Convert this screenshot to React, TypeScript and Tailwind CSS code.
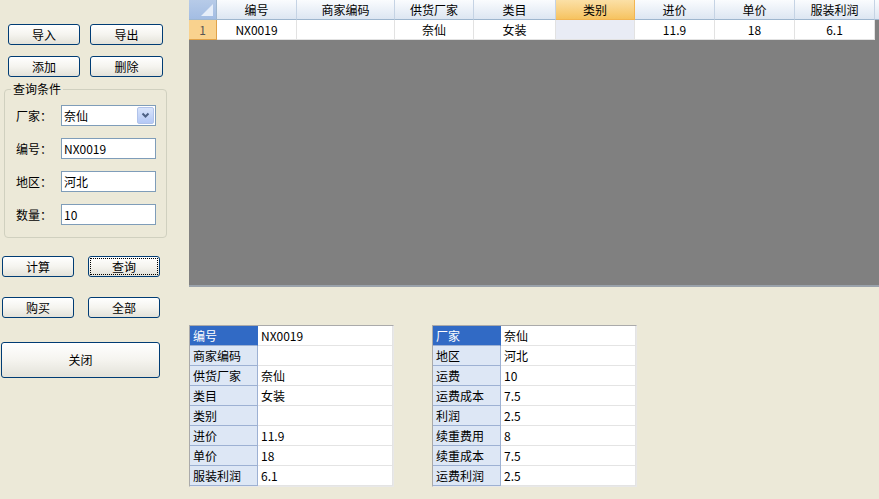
import React from "react";

const font = { fontFamily: '"SimSun", "Noto Sans CJK SC", sans-serif' };

function XpButton({ label, className = "", focused = false }: { label: string; className?: string; focused?: boolean }) {
  return (
    <button
      className={`relative flex items-center justify-center rounded-[3px] border border-[#003c74] bg-gradient-to-b from-[#ffffff] via-[#f5f4ef] to-[#e3e2d9] text-[12px] leading-none text-black ${className}`}
    >
      {focused && <span className="absolute inset-[1px] border border-dotted border-[#000]" />}
      {label}
    </button>
  );
}

function FieldRow({ label, children }: { label: string; children: React.ReactNode }) {
  return (
    <div className="flex items-center">
      <span className="w-[56px] shrink-0 pl-[11px] text-[12px] leading-none whitespace-nowrap">{label}：</span>
      {children}
    </div>
  );
}

function TextBox({ value }: { value: string }) {
  return (
    <div className="flex h-[21px] w-[95px] items-center border border-[#7f9db9] bg-white pl-[2px] text-[12px] leading-none">
      {value}
    </div>
  );
}

const columns = [
  { name: "编号", w: 80, val: "NX0019" },
  { name: "商家编码", w: 98, val: "" },
  { name: "供货厂家", w: 79, val: "奈仙" },
  { name: "类目", w: 82, val: "女装" },
  { name: "类别", w: 79, val: "", sel: true },
  { name: "进价", w: 80, val: "11.9" },
  { name: "单价", w: 80, val: "18" },
  { name: "服装利润", w: 80, val: "6.1" },
];

function Grid() {
  return (
    <div className="flex h-[287px] flex-col bg-[#808080]">
      <div className="flex h-[20px] bg-white">
        <div className="relative h-full w-[28px] border-r border-b border-[#9eb6ce] bg-gradient-to-b from-[#b7cbe8] to-[#a3bde3]">
          <svg className="absolute right-[3px] bottom-[3px]" width="12" height="12" viewBox="0 0 12 12">
            <polygon points="12,0 12,12 0,12" fill="#e6eef9" />
          </svg>
        </div>
        {columns.map((c) => (
          <div
            key={c.name}
            style={{ width: c.w }}
            className={`flex h-full items-center justify-center border-r border-b text-[12px] leading-none ${
              c.sel
                ? "border-[#f2b552] bg-gradient-to-b from-[#fbe0a6] to-[#f6c35f]"
                : "border-[#c5d3e4] border-b-[#9eb6ce] bg-gradient-to-b from-[#fafcfe] to-[#dde6f2]"
            }`}
          >
            {c.name}
          </div>
        ))}
        <div className="h-full flex-1 border-b border-[#9eb6ce] bg-gradient-to-b from-[#fafcfe] to-[#dde6f2]" />
      </div>
      <div className="flex h-[20px] bg-white">
        <div className="flex h-full w-[28px] items-center justify-center border-r border-b border-[#e0a24a] bg-[#f9d28e] text-[12px] leading-none text-[#555]">
          1
        </div>
        {columns.map((c) => (
          <div
            key={c.name}
            style={{ width: c.w }}
            className={`flex h-full items-center justify-center border-r border-b border-[#e2e2e2] text-[12px] leading-none ${
              c.sel ? "bg-[#e9ecf5]" : "bg-white"
            }`}
          >
            {c.val}
          </div>
        ))}
        <div className="h-full flex-1 bg-[#808080]" />
      </div>
      <div className="flex-1" />
      <div className="h-[2px] bg-[#9aa2ab]" />
    </div>
  );
}

function DetailTable({ rows, labelW }: { rows: [string, string][]; labelW: number }) {
  return (
    <div className="w-[205px] border border-[#aaaaaa] border-r-[#e8e8e8] border-b-[#e8e8e8] bg-white">
      {rows.map(([k, v], i) => (
        <div key={k} className="flex h-[20px]">
          <div
            style={{ width: labelW }}
            className={`flex items-center border-r border-b pl-[3px] text-[12px] leading-none ${
              i === 0 ? "border-[#316ac5] border-b-[#9db1d3] bg-[#316ac5] text-white" : "border-[#9db1d3] bg-[#dde7f5] text-black"
            }`}
          >
            {k}
          </div>
          <div className="flex flex-1 items-center border-b border-r border-[#e4e4e4] pl-[3px] text-[12px] leading-none">{v}</div>
        </div>
      ))}
    </div>
  );
}

export default function App() {
  return (
    <div style={font} className="flex h-[499px] w-[879px] overflow-hidden bg-[#ece9d8] text-black">
      <div className="flex w-[189px] shrink-0 flex-col">
        <div className="mt-[24px] flex gap-[10px] pl-[8px]">
          <XpButton label="导入" className="h-[21px] w-[72px]" />
          <XpButton label="导出" className="h-[21px] w-[73px]" />
        </div>
        <div className="mt-[11px] flex gap-[10px] pl-[8px]">
          <XpButton label="添加" className="h-[21px] w-[72px]" />
          <XpButton label="删除" className="h-[21px] w-[73px]" />
        </div>
        <fieldset className="mt-[5px] ml-[4px] h-[156px] w-[163px] rounded-[4px] border border-[#d0d0bf]">
          <legend className="ml-[6px] px-[2px] text-[12px] leading-[14px]">查询条件</legend>
          <div className="mt-[9px] flex flex-col gap-[12px]">
            <FieldRow label="厂家">
              <div className="flex h-[21px] w-[95px] items-center justify-between border border-[#7f9db9] bg-white pl-[2px] pr-[1px] text-[12px] leading-none">
                <span>奈仙</span>
                <span className="flex h-[17px] w-[17px] items-center justify-center rounded-[2px] border border-[#b1c3ea] bg-gradient-to-b from-[#d8e4fb] to-[#b4c8f5]">
                  <svg width="9" height="7" viewBox="0 0 9 7">
                    <polyline points="1.5,1.5 4.5,4.5 7.5,1.5" fill="none" stroke="#4d6185" strokeWidth="2" />
                  </svg>
                </span>
              </div>
            </FieldRow>
            <FieldRow label="编号">
              <TextBox value="NX0019" />
            </FieldRow>
            <FieldRow label="地区">
              <TextBox value="河北" />
            </FieldRow>
            <FieldRow label="数量">
              <TextBox value="10" />
            </FieldRow>
          </div>
        </fieldset>
        <div className="mt-[18px] flex gap-[14px] pl-[2px]">
          <XpButton label="计算" className="h-[21px] w-[72px]" />
          <XpButton label="查询" className="h-[21px] w-[72px]" focused />
        </div>
        <div className="mt-[20px] flex gap-[14px] pl-[2px]">
          <XpButton label="购买" className="h-[21px] w-[72px]" />
          <XpButton label="全部" className="h-[21px] w-[72px]" />
        </div>
        <div className="mt-[24px] pl-[1px]">
          <XpButton label="关闭" className="h-[36px] w-[159px]" />
        </div>
      </div>
      <div className="flex flex-1 flex-col">
        <Grid />
        <div className="mt-[38px] flex gap-[38px]">
          <DetailTable
            labelW={68}
            rows={[
              ["编号", "NX0019"],
              ["商家编码", ""],
              ["供货厂家", "奈仙"],
              ["类目", "女装"],
              ["类别", ""],
              ["进价", "11.9"],
              ["单价", "18"],
              ["服装利润", "6.1"],
            ]}
          />
          <DetailTable
            labelW={68}
            rows={[
              ["厂家", "奈仙"],
              ["地区", "河北"],
              ["运费", "10"],
              ["运费成本", "7.5"],
              ["利润", "2.5"],
              ["续重费用", "8"],
              ["续重成本", "7.5"],
              ["运费利润", "2.5"],
            ]}
          />
        </div>
      </div>
    </div>
  );
}
